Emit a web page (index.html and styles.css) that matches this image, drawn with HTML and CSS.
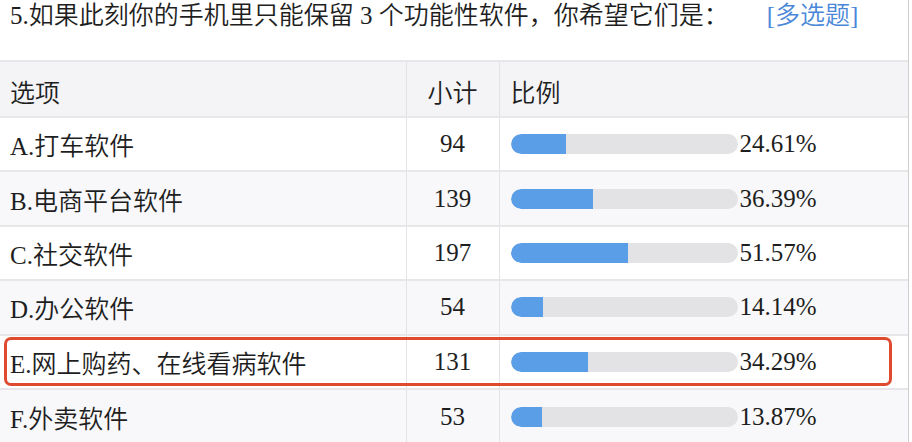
FILE: index.html
```html
<!DOCTYPE html>
<html lang="zh-CN">
<head>
<meta charset="utf-8">
<title>多选题统计</title>
<link rel="stylesheet" href="styles.css">
</head>
<body>
<div class="page">
  <h1 class="title">5.如果此刻你的手机里只能保留 3 个功能性软件，你希望它们是：<span class="tag">[多选题]</span></h1>
  <div class="table-wrap">
    <table class="stats">
      <thead>
        <tr>
          <th class="c-opt">选项</th>
          <th class="c-num">小计</th>
          <th class="c-pct">比例</th>
        </tr>
      </thead>
      <tbody>
        <tr>
          <td class="c-opt">A.打车软件</td>
          <td class="c-num">94</td>
          <td class="c-pct"><div class="pct"><div class="bar"><div class="fill" style="width:24.61%"></div></div><span class="val">24.61%</span></div></td>
        </tr>
        <tr class="alt">
          <td class="c-opt">B.电商平台软件</td>
          <td class="c-num">139</td>
          <td class="c-pct"><div class="pct"><div class="bar"><div class="fill" style="width:36.39%"></div></div><span class="val">36.39%</span></div></td>
        </tr>
        <tr>
          <td class="c-opt">C.社交软件</td>
          <td class="c-num">197</td>
          <td class="c-pct"><div class="pct"><div class="bar"><div class="fill" style="width:51.57%"></div></div><span class="val">51.57%</span></div></td>
        </tr>
        <tr class="alt">
          <td class="c-opt">D.办公软件</td>
          <td class="c-num">54</td>
          <td class="c-pct"><div class="pct"><div class="bar"><div class="fill" style="width:14.14%"></div></div><span class="val">14.14%</span></div></td>
        </tr>
        <tr>
          <td class="c-opt">E.网上购药、在线看病软件</td>
          <td class="c-num">131</td>
          <td class="c-pct"><div class="pct"><div class="bar"><div class="fill" style="width:34.29%"></div></div><span class="val">34.29%</span></div></td>
        </tr>
        <tr class="alt">
          <td class="c-opt">F.外卖软件</td>
          <td class="c-num">53</td>
          <td class="c-pct"><div class="pct"><div class="bar"><div class="fill" style="width:13.87%"></div></div><span class="val">13.87%</span></div></td>
        </tr>
      </tbody>
    </table>
    <div class="highlight"></div>
  </div>
</div>
</body>
</html>
```

FILE: styles.css
```css
* { box-sizing: border-box; }
html, body { margin: 0; padding: 0; background: #ffffff; }
body {
  font-family: "Liberation Serif", "Noto Sans CJK SC", serif;
  color: #1e1e1e;
  font-size: 25px;
  font-weight: 350;
}
.page {
  width: 909px;
  height: 442px;
  overflow: hidden;
  border-right: 1px solid #cfcfcf;
}
.title {
  margin: 0;
  padding: 0 0 0 10px;
  height: 60px;
  font-size: 25px;
  font-weight: 350;
  line-height: 32px;
  color: #1e1e1e;
  white-space: nowrap;
}
.tag {
  color: #4a87d8;
  margin-left: 38px;
}
.table-wrap { position: relative; }
.stats {
  width: 908px;
  border-collapse: collapse;
  table-layout: fixed;
}
.stats th, .stats td {
  padding: 0;
  font-weight: 350;
  border-top: 2px solid #e7e7e9;
  height: 54.4px;
  vertical-align: middle;
  white-space: nowrap;
}
.stats thead th { height: 56px; background: #f4f4f6; padding-top: 4px; }
.stats tbody tr { background: #ffffff; }
.stats tbody tr.alt { background: #f8f8fa; }
.c-opt { width: 406px; text-align: left; padding-left: 10px !important; }
.c-num { width: 93px; text-align: center; border-left: 1px solid #e3e3e5; }
.c-pct { text-align: left; border-left: 1px solid #e3e3e5; padding-left: 11px !important; }
.pct {
  display: flex;
  align-items: center;
}
.bar {
  width: 227px;
  height: 20px;
  border-radius: 10px;
  background: #e3e3e5;
  overflow: hidden;
  flex: none;
}
.fill {
  height: 100%;
  background: #5b9ee8;
  border-radius: 10px 0 0 10px;
}
.val { margin-left: 2px; }
.highlight {
  position: absolute;
  left: 4px;
  top: 277px;
  width: 888px;
  height: 49px;
  border: 3px solid #de4b2f;
  border-radius: 7px;
  pointer-events: none;
}
```
